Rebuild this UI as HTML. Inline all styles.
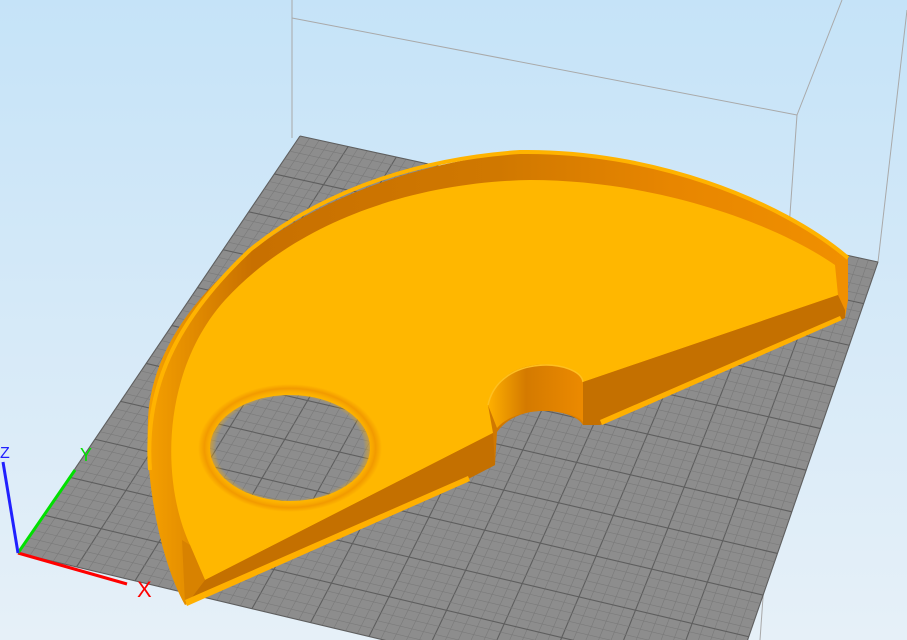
<!DOCTYPE html>
<html><head><meta charset="utf-8"><style>
html,body{margin:0;padding:0;width:907px;height:640px;overflow:hidden}
svg{display:block;overflow:hidden}
</style></head><body>
<svg id="s" width="907" height="640" viewBox="0 0 907 640" xmlns="http://www.w3.org/2000/svg">
<defs>
<linearGradient id="bg" x1="0" y1="0" x2="0" y2="1"><stop offset="0" stop-color="#c5e3f8"/><stop offset="1" stop-color="#e6f0f8"/></linearGradient>
<linearGradient id="wall" x1="0" y1="0" x2="1" y2="0"><stop offset="0" stop-color="#f5a000"/><stop offset="0.15" stop-color="#c87000"/><stop offset="0.5" stop-color="#d07800"/><stop offset="0.75" stop-color="#e88600"/><stop offset="1" stop-color="#f09000"/></linearGradient>
<linearGradient id="notch" x1="0" y1="0" x2="1" y2="0"><stop offset="0" stop-color="#ffb000"/><stop offset="0.4" stop-color="#d47a00"/><stop offset="1" stop-color="#ec8a00"/></linearGradient>
<radialGradient id="holeg" cx="0.5" cy="0.5" r="0.5"><stop offset="0" stop-color="#ffb800" stop-opacity="0"/><stop offset="0.8" stop-color="#ffb800" stop-opacity="0"/><stop offset="0.93" stop-color="#f29a00"/><stop offset="1" stop-color="#ffb700"/></radialGradient>
<clipPath id="hc"><ellipse cx="290" cy="448" rx="80" ry="53"/></clipPath>
<clipPath id="nc"><path d="M583,422 C575,410 520,402 497,428 L497,445 L590,445 Z"/></clipPath>
</defs>
<rect width="907" height="640" fill="url(#bg)"/>
<g stroke="#a9a9a9" stroke-width="1" fill="none">
<line x1="292" y1="0" x2="292" y2="138"/>
<line x1="292" y1="18" x2="797" y2="115"/>
<line x1="797" y1="115" x2="760" y2="640"/>
<line x1="797" y1="115" x2="842" y2="0"/>
<line x1="907" y1="10" x2="878" y2="262"/>
</g>
<g id="plate">
<polygon points="300,136 878,262 720,720 18,553" fill="#8d8d8d"/>
<g id="grid"></g>
</g>
<path d="M185,605 C160,560 145,480 148,420 C152,300 300,175 520,152 C650,150 780,200 848,258 L848,300 L845,318 L600,425 L583,425 C575,410 520,400 497,432 L495,465 L470,478 Z" fill="url(#wall)"/>
<path d="M150,470 C145,400 165,330 250,250 C330,185 430,158 520,152 C650,150 780,200 848,258" fill="none" stroke="#ffb300" stroke-width="4"/>
<path fill-rule="evenodd" fill="#ffb700" d="M205,580 L190,545 C160,480 162,370 225,300 C300,218 420,182 530,180 C650,180 770,220 835,265 L838,295 L583,382 C580,360 500,350 488,405 L493,433 Z"/>
<use href="#plate" clip-path="url(#hc)"/>
<ellipse cx="290" cy="448" rx="92" ry="64" fill="url(#holeg)"/>
<path d="M488,405 C500,352 580,360 583,382 L583,422 C575,410 520,402 497,428 Z" fill="url(#notch)"/>
<path d="M488,405 C500,352 580,360 583,382" fill="none" stroke="#ffc020" stroke-width="1.5"/>
<polygon points="583,382 838,295 845,310 845,318 600,425 583,425" fill="#c47000"/>
<polygon points="205,580 493,433 495,465 470,478 190,598" fill="#c47000"/>
<polygon points="182,540 190,545 205,580 190,600 185,603" fill="#d88200"/>
<polygon points="185,600 468,476 470,481 187,606" fill="#ffb000"/>
<polygon points="600,420 840,316 842,320 602,425" fill="#ffb000"/>
<line x1="18" y1="553" x2="127" y2="584" stroke="#ff0000" stroke-width="3"/>
<line x1="18" y1="553" x2="75" y2="470" stroke="#00e000" stroke-width="3"/>
<line x1="18" y1="553" x2="3" y2="462" stroke="#2020ff" stroke-width="3"/>
<text x="137" y="597" font-family="Liberation Sans, sans-serif" font-size="22" fill="#ff0000">X</text>
<text x="80" y="461" font-family="Liberation Sans, sans-serif" font-size="18" fill="#00e000">Y</text>
<text x="0" y="458" font-family="Liberation Sans, sans-serif" font-size="16" fill="#2020ff">Z</text>
</svg>
<script>
(function(){
var A=[300,136],B=[878,262],C=[720,720],D=[18,553];
function P(u,v){var x=(1-u)*(1-v)*A[0]+u*(1-v)*B[0]+u*v*C[0]+(1-u)*v*D[0];var y=(1-u)*(1-v)*A[1]+u*(1-v)*B[1]+u*v*C[1]+(1-u)*v*D[1];return [x,y];}
var g=document.getElementById('grid'),s='';
var NU=60,NV=55;
for(var i=0;i<=NU;i++){var u=i/NU,p=P(u,0),q=P(u,1),m=i%5==0;s+='<line x1="'+p[0]+'" y1="'+p[1]+'" x2="'+q[0]+'" y2="'+q[1]+'" stroke="'+(m?'#5e5e5e':'#7a7a7a')+'" stroke-width="'+(m?1.1:0.6)+'"/>';}
for(var j=0;j<=NV;j++){var v=j/NV,p=P(0,v),q=P(1,v),m=j%5==0;s+='<line x1="'+p[0]+'" y1="'+p[1]+'" x2="'+q[0]+'" y2="'+q[1]+'" stroke="'+(m?'#5e5e5e':'#7a7a7a')+'" stroke-width="'+(m?1.1:0.6)+'"/>';}
g.innerHTML=s;
})();
</script>
</body></html>
